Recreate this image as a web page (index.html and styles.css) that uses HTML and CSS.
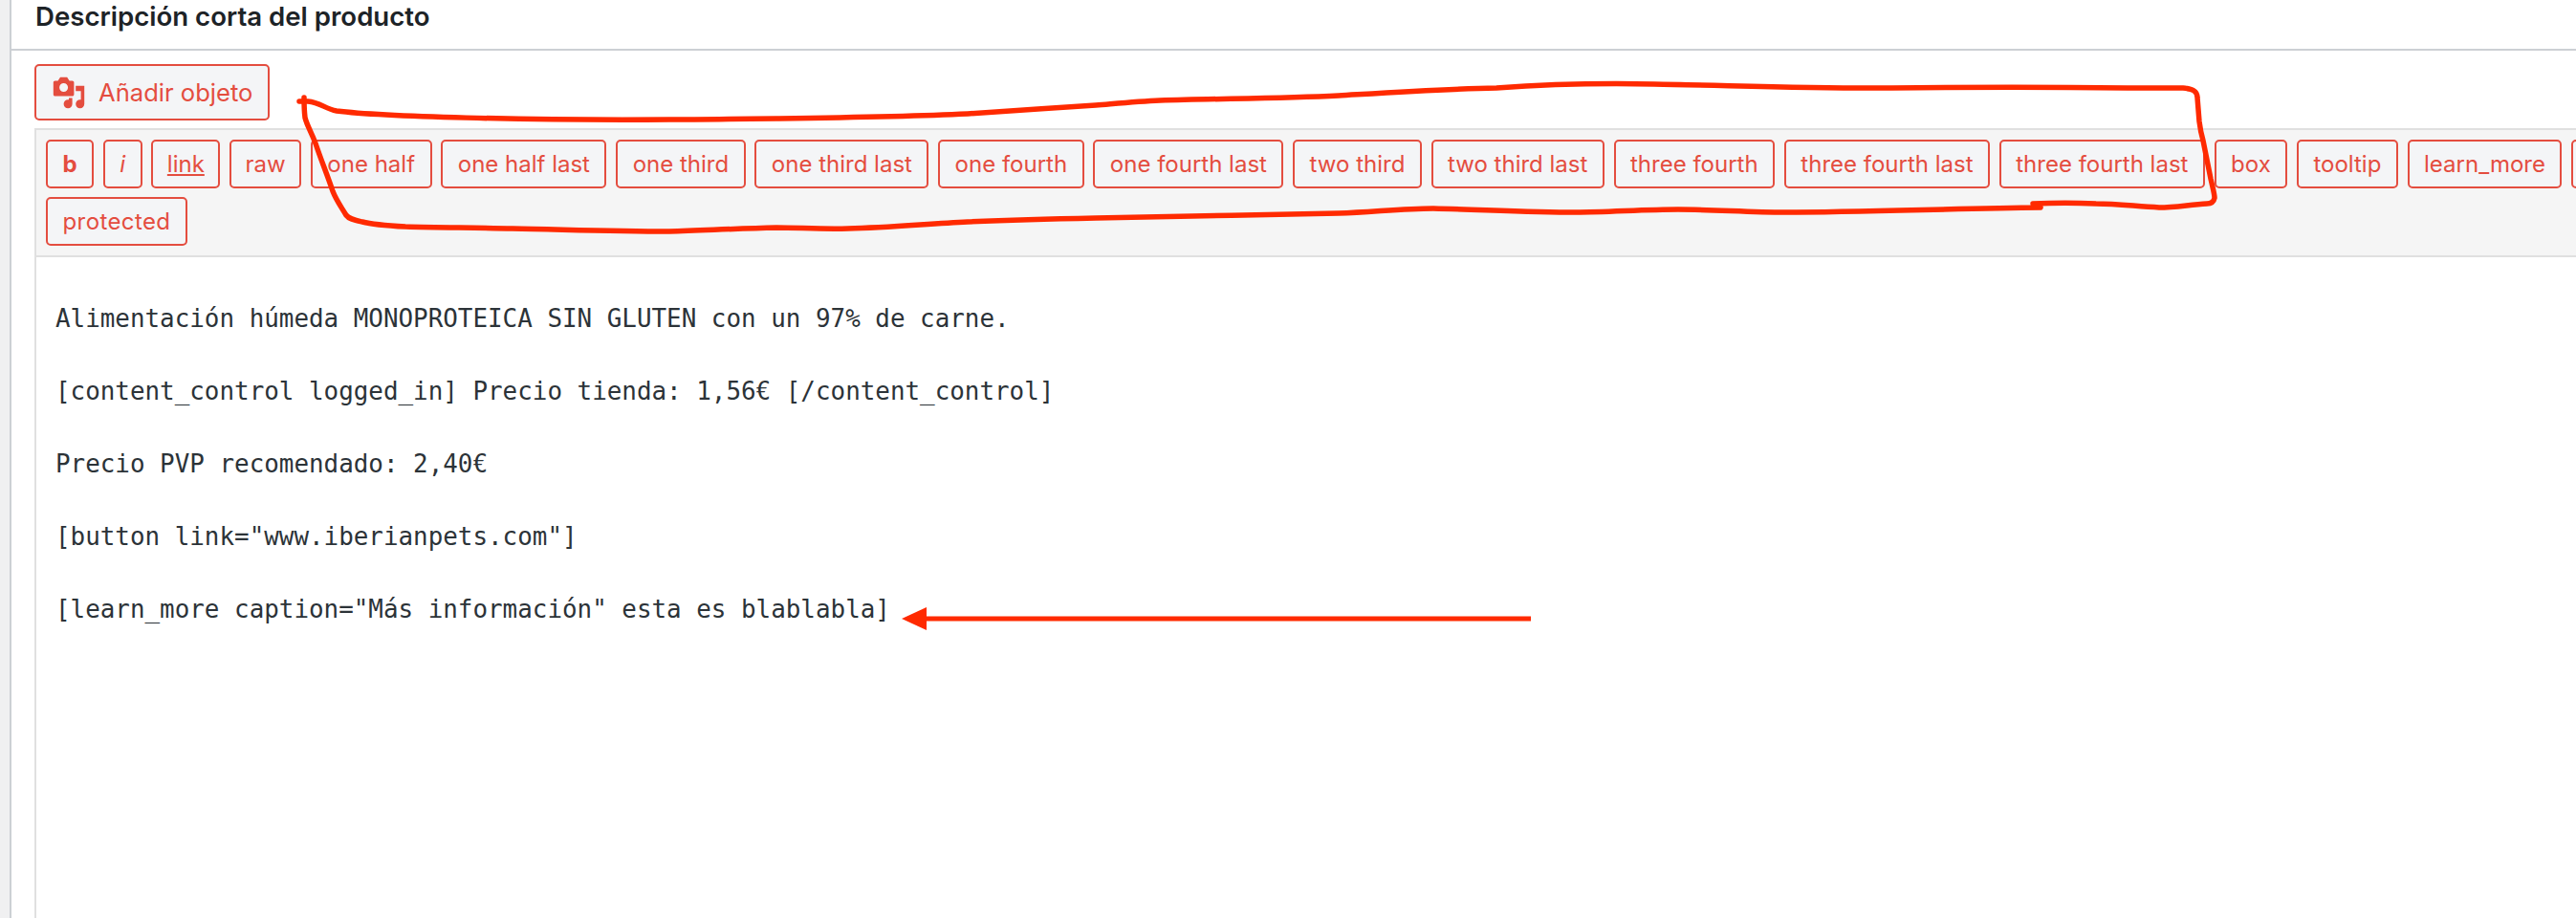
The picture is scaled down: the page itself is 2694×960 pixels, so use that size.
FILE: index.html
```html
<!DOCTYPE html>
<html lang="es">
<head>
<meta charset="utf-8">
<title>Descripción corta del producto</title>
<link rel="stylesheet" href="styles.css">
</head>
<body>
<div class="page">
  <section class="panel">
    <h2 class="panel-title">Descripción corta del producto</h2>
    <div class="panel-body">
      <button class="btn btn-media">
        <svg class="media-icon" viewBox="0 0 20 20" aria-hidden="true"><path d="M13 11V4c0-.55-.45-1-1-1h-1.67L9 1H5L3.67 3H2c-.55 0-1 .45-1 1v7c0 .55.45 1 1 1h10c.55 0 1-.45 1-1zM7 4.5c1.38 0 2.5 1.12 2.5 2.5S8.38 9.5 7 9.5 4.5 8.38 4.5 7 5.62 4.5 7 4.5zM14 6h5v10.5c0 1.38-1.12 2.5-2.5 2.5S14 17.88 14 16.5s1.12-2.5 2.5-2.5c.17 0 .34.02.5.05V9h-3V6zm-4 8.05V13h2v3.5c0 1.38-1.12 2.5-2.5 2.5S7 17.88 7 16.5 8.12 14 9.5 14c.17 0 .34.02.5.05z"/></svg>
        Añadir objeto
      </button>
      <div class="toolbar">
        <button class="btn btn-b">b</button>
        <button class="btn btn-i">i</button>
        <button class="btn btn-link btn-tight">link</button>
        <button class="btn btn-tight">raw</button>
        <button class="btn">one half</button>
        <button class="btn">one half last</button>
        <button class="btn">one third</button>
        <button class="btn">one third last</button>
        <button class="btn">one fourth</button>
        <button class="btn">one fourth last</button>
        <button class="btn">two third</button>
        <button class="btn">two third last</button>
        <button class="btn">three fourth</button>
        <button class="btn">three fourth last</button>
        <button class="btn">three fourth last</button>
        <button class="btn">box</button>
        <button class="btn">tooltip</button>
        <button class="btn">learn_more</button>
        <button class="btn btn-cut"></button>
        <button class="btn btn-wide">protected</button>
      </div>
      <div class="editor">
        <div class="line">Alimentación húmeda MONOPROTEICA SIN GLUTEN con un 97% de carne.</div>
        <div class="line">[content_control logged_in] Precio tienda: 1,56€ [/content_control]</div>
        <div class="line">Precio PVP recomendado: 2,40€</div>
        <div class="line">[button link="www.iberianpets.com"]</div>
        <div class="line">[learn_more caption="Más información" esta es blablabla]</div>
      </div>
    </div>
  </section>
  <svg class="marks" viewBox="0 0 2694 960" aria-hidden="true">
    <path class="scribble" d="M313 106 L322 106 C335 107 340 114 352 116 C400 122 550 126 700 125 C740 125 780 124 812 124 C880 123 950 122 1012 119 C1060 116 1100 113 1146 110 C1170 108 1190 106 1213 105 C1280 103 1340 103 1400 100 C1450 97 1510 93 1565 92 C1620 88 1680 87 1730 88 C1800 89 1900 93 1978 92 C2060 91 2150 91 2225 92 C2245 92 2270 92 2283 92 C2293 93 2298 95 2298 102 L2300 127 C2301 135 2302 140 2304 147 L2312 187 C2315 200 2316 203 2316 207 C2315 212 2312 213 2308 213 C2290 214 2275 217 2258 217 C2235 216 2215 213 2192 213 C2170 212 2150 212 2126 213 L2134 217 C2040 218 1950 222 1866 222 C1830 222 1790 219 1755 219 C1720 219 1680 222 1648 222 C1600 222 1545 219 1499 218 C1465 218 1435 222 1400 223 C1320 225 1220 226 1146 228 C1100 229 1060 230 1012 232 C970 234 930 238 887 239 C860 240 835 238 812 238 C770 239 735 241 700 242 C640 242 590 240 536 239 C500 238 460 238 424 237 C405 236 390 235 379 232 C370 230 365 229 362 225 C356 215 352 210 348 200 C342 182 336 168 330 150 C325 137 321 131 319 123 C318 115 318 110 318 102"/>
    <path class="arrow-line" d="M1601 647 H965"/>
    <path class="arrow-head" d="M943 647 L969 635 V659 Z"/>
  </svg>
</div>
</body>
</html>
```

FILE: styles.css
```css
html, body {
  margin: 0;
  height: 100%;
  overflow: hidden;
  background: #f0f0f1;
}

.page {
  position: relative;
  height: 960px;
  padding-left: 10px;
  font-family: Inter, "Liberation Sans", sans-serif;
}

.panel {
  width: 2860px;
  height: 960px;
  box-sizing: border-box;
  background: #fff;
  border-left: 2px solid #ccd0d4;
}

.panel-title {
  margin: 0;
  height: 53px;
  padding: 0 0 0 25px;
  box-sizing: border-box;
  border-bottom: 2px solid #ccd0d4;
  font-size: 27.6px;
  font-weight: 600;
  line-height: 34px;
  color: #1d2327;
}

.panel-body {
  padding: 14px 0 0 24px;
}

.btn {
  height: 51px;
  padding: 0 15.5px;
  box-sizing: border-box;
  background: #f4f5f7;
  border: 2px solid #e44d3f;
  border-radius: 5px;
  color: #e44d3f;
  font-family: inherit;
  font-size: 24px;
  line-height: 1;
  white-space: nowrap;
}

.btn-media {
  display: flex;
  align-items: center;
  height: 59px;
  gap: 13px;
  padding: 0 16px;
  font-size: 25.6px;
}

.btn-tight {
  padding: 0 14.5px;
}

.btn-wide {
  padding: 0 15.5px;
  letter-spacing: 0.4px;
}

.btn-cut {
  width: 110px;
}

.media-icon {
  width: 36px;
  height: 36px;
  fill: #e44d3f;
}

.btn-b { font-weight: 700; }
.btn-i { font-style: italic; }
.btn-link { text-decoration: underline; }

.toolbar {
  display: flex;
  flex-wrap: wrap;
  gap: 9px 9.7px;
  margin-top: 8px;
  padding: 10px;
  background: #f5f5f5;
  border: 2px solid #e0e0e0;
  border-right: 0;
}

.editor {
  height: 700px;
  padding: 26px 0 0 20px;
  border-left: 2px solid #e0e0e0;
  font-family: "DejaVu Sans Mono", "Liberation Mono", monospace;
  font-size: 25.9px;
  line-height: 76px;
  color: #2c3338;
}

.line {
  white-space: pre;
}

.marks {
  position: absolute;
  top: 0;
  left: 0;
  width: 2694px;
  height: 960px;
  pointer-events: none;
}

.scribble {
  fill: none;
  stroke: #ff2a00;
  stroke-width: 5.5;
  stroke-linecap: round;
  stroke-linejoin: round;
}

.arrow-line {
  fill: none;
  stroke: #ff2a00;
  stroke-width: 5;
}

.arrow-head {
  fill: #ff2a00;
}
```
